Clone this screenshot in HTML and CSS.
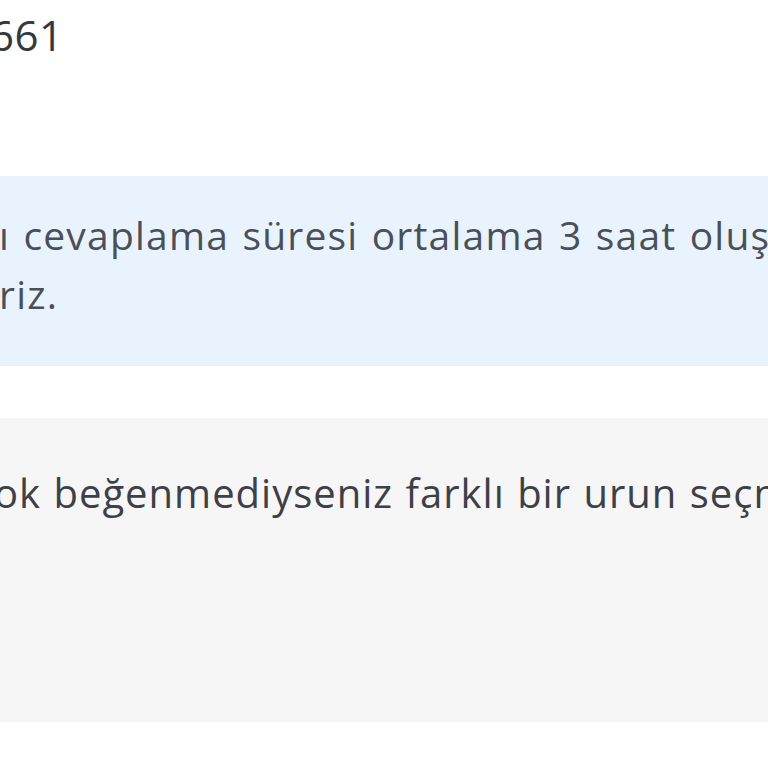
FILE: index.html
```html
<!DOCTYPE html>
<html lang="tr">
<head>
<meta charset="utf-8">
<link rel="stylesheet" href="styles.css">
</head>
<body>
<div class="page">
  <div class="code">661</div>
  <div class="notice">ı cevaplama süresi ortalama 3 saat oluşmaktadır.<br>riz.</div>
  <div class="panel">ok beğenmediyseniz farklı bir urun seçmek için</div>
</div>
</body>
</html>
```
FILE: styles.css
```css
html, body {
  margin: 0;
  padding: 0;
  background: #ffffff;
  overflow: hidden;
}
.page {
  width: 768px;
  font-family: "Open Sans", "Lato", sans-serif;
  white-space: nowrap;
}
.code {
  font-size: 42px;
  line-height: 50px;
  color: #35383d;
  padding-top: 10px;
  margin-left: -10px;
  letter-spacing: 0.5px;
}
.notice {
  margin-top: 116px;
  background: #e9f3fd;
  color: #4b5058;
  font-size: 39px;
  line-height: 59px;
  letter-spacing: 1.2px;
  word-spacing: 2px;
  padding: 29px 0 43px 0;
  margin-left: -1px;
  overflow: hidden;
}
.panel {
  margin-top: 52px;
  background: #f6f6f6;
  color: #3d4047;
  font-size: 40px;
  line-height: 59px;
  letter-spacing: 1px;
  word-spacing: 1px;
  padding: 45px 0 0 0;
  height: 259px;
  margin-left: -6px;
  overflow: hidden;
}
```
